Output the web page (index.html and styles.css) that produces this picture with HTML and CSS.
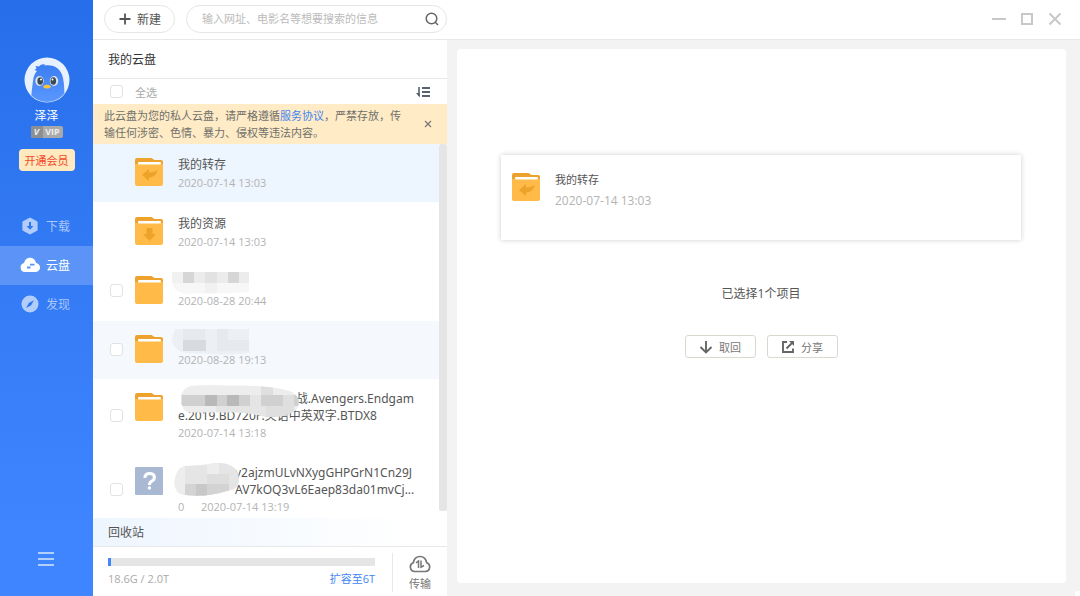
FILE: index.html
```html
<!DOCTYPE html>
<html lang="zh-CN">
<head>
<meta charset="utf-8">
<title>我的云盘</title>
<link rel="stylesheet" href="styles.css">
</head>
<body>
<svg class="sprite" aria-hidden="true">
  <symbol id="folder" viewBox="0 0 28 28">
    <path fill="#eda22e" d="M0 2a2 2 0 0 1 2-2h14.500l3 2H26a2 2 0 0 1 2 2v8H0z"/>
    <path fill="#ffba48" d="M0 6h28v20a2 2 0 0 1-2 2H2a2 2 0 0 1-2-2z"/>
    <rect x="3" y="4" width="23" height="2.400" rx="1" fill="#fff"/>
  </symbol>
  <symbol id="folder-reply" viewBox="0 0 28 28">
    <use href="#folder"/>
    <path fill="#eda22a" d="M7 17 14 11v3.500c4 0 7-1 8.500-3C22 16.500 18.500 19.500 14 19.500V23z"/>
  </symbol>
  <symbol id="folder-down" viewBox="0 0 28 28">
    <use href="#folder"/>
    <path fill="#eda22a" d="M11.500 11h6v6H21l-6.500 7L8 17h3.500z"/>
  </symbol>
</svg>
<div class="app">
  <aside class="sidebar">
    <svg class="avatar" viewBox="0 0 46 46">
      <defs><clipPath id="face"><circle cx="23" cy="23" r="22"/></clipPath>
      <linearGradient id="bird" x1="0" y1="0" x2="0" y2="1"><stop offset="0" stop-color="#3b7df2"/><stop offset="1" stop-color="#5b98ff"/></linearGradient></defs>
      <circle cx="23" cy="23" r="22.500" fill="#e8f1ff"/>
      <path clip-path="url(#face)" fill="url(#bird)" d="M7 46c0-8 1-14 2-22 .6-5 2-8 4-10l-2.500-1 2-1.500-1-2.500 3.500 .5c1.500-2 4-2.500 6-2L20 8.500c10-1.500 17 3 19 12.500 1.500 7 1.500 16 1.500 25z"/>
      <ellipse cx="15.500" cy="24" rx="4.200" ry="5" fill="#d9e2ec"/><ellipse cx="30" cy="24" rx="4.200" ry="5" fill="#d9e2ec"/>
      <ellipse cx="16.200" cy="24" rx="2.800" ry="3.800" fill="#3c4a56"/><ellipse cx="29.300" cy="24" rx="2.800" ry="3.800" fill="#3c4a56"/>
      <circle cx="17" cy="22.500" r="1" fill="#fff"/><circle cx="28.500" cy="22.500" r="1" fill="#fff"/>
      <path fill="#ffc43a" d="M19 29.500c1.500-2.500 6.500-2.500 8 0-1 2.800-7 2.800-8 0z"/>
    </svg>
    <div class="user">泽泽</div>
    <div class="vip"><span class="vip-mark">V</span><span class="vip-word">VIP</span></div>
    <button class="upgrade">开通会员</button>
    <nav class="nav">
      <a class="nav-item" href="#download">
        <svg viewBox="0 0 20 20"><path fill="#b3cdfb" d="M10 1.500 17 5.300a1 1 0 0 1 .6 1v7.400a1 1 0 0 1-.6 1L10 18.500 3 14.700a1 1 0 0 1-.6-1V6.300a1 1 0 0 1 .6-1z"/><path fill="#3179f2" d="M9 6h2v4h2.500L10 13.700 6.500 10H9z"/></svg>
        <span>下载</span></a>
      <a class="nav-item active" href="#cloud">
        <svg viewBox="0 0 20 20"><path fill="#fff" d="M5 17a4.500 4.500 0 0 1-.8-8.900C4.500 5 7 2.800 10 2.800S15.500 5 16 8a4.500 4.500 0 0 1-1 9z"/><path stroke="#5b94f6" stroke-width="1.800" d="M10 9.700h4.500M7 12.500h3.500"/></svg>
        <span>云盘</span></a>
      <a class="nav-item" href="#discover">
        <svg viewBox="0 0 20 20"><circle cx="10" cy="10" r="8.500" fill="#b3cdfb"/><path fill="#3179f2" d="M14 6.200 11 11.500 6 14l3-5.200z"/></svg>
        <span>发现</span></a>
    </nav>
    <button class="menu" aria-label="菜单"><svg viewBox="0 0 16 14"><path stroke="#b3cffd" stroke-width="2" d="M0 1h16M0 7h16M0 13h16"/></svg></button>
  </aside>
  <div class="workspace">
    <header class="topbar">
      <button class="new"><svg viewBox="0 0 12 12"><path stroke="#555" stroke-width="1.800" d="M6 .5v11M.5 6h11"/></svg>新建</button>
      <label class="search">
        <input type="text" aria-label="搜索" placeholder="输入网址、电影名等想要搜索的信息">
        <svg viewBox="0 0 14 14"><g fill="none" stroke="#666" stroke-width="1.500"><circle cx="6.500" cy="6.500" r="5.300"/><path d="m10.300 10.300 2.700 2.700"/></g></svg>
      </label>
      <div class="window-controls">
        <button aria-label="最小化"><svg viewBox="0 0 14 14"><path stroke="#c8c8c8" stroke-width="2" d="M0 7h14"/></svg></button>
        <button aria-label="最大化"><svg viewBox="0 0 14 14"><path fill="none" stroke="#c8c8c8" stroke-width="2" d="M2 2h10v10H2z"/></svg></button>
        <button aria-label="关闭"><svg viewBox="0 0 14 14"><path stroke="#c8c8c8" stroke-width="2" d="m1.500 1.500 11 11m0-11-11 11"/></svg></button>
      </div>
    </header>
    <div class="content">
      <section class="drive">
        <h1 class="drive-title">我的云盘</h1>
        <div class="select-row">
          <label class="select-all"><input class="check" type="checkbox">全选</label>
          <button class="sort" aria-label="排序"><svg viewBox="0 0 14 12"><path fill="none" stroke="#596270" stroke-width="2" d="M6 2h8M6 6h8M6 10h8"/><path fill="none" stroke="#596270" stroke-width="1.600" d="M3 1v9"/><path fill="#596270" d="M0 7h3.800v4.500z"/></svg></button>
        </div>
        <div class="notice">
          <p>此云盘为您的私人云盘，请严格遵循<a href="#terms">服务协议</a>，严禁存放，传输任何涉密、色情、暴力、侵权等违法内容。</p>
          <button aria-label="关闭提示"><svg viewBox="0 0 8 8"><path stroke="#777" stroke-width="1.200" d="m1 1 6 6m0-6L1 7"/></svg></button>
        </div>
        <div class="list-area">
          <ul class="files">
            <li class="file selected"><span class="pick"></span><svg class="icon"><use href="#folder-reply"/></svg>
              <div class="info"><div class="name">我的转存</div><div class="meta">2020-07-14 13:03</div></div></li>
            <li class="file"><span class="pick"></span><svg class="icon"><use href="#folder-down"/></svg>
              <div class="info"><div class="name">我的资源</div><div class="meta">2020-07-14 13:03</div></div></li>
            <li class="file"><span class="pick"><input class="check" type="checkbox" aria-label="选择"></span><svg class="icon"><use href="#folder"/></svg>
              <div class="info"><div class="name"></div><div class="meta">2020-08-28 20:44</div>
              <svg class="mask mask-short" viewBox="0 0 80 28"><path fill="#f7f7f7" d="M1 2h77v20c-20 2-50 1-64 2C5 22 1 17 1 10z"/><path fill="#ececec" d="M1 2h77v11H1z"/><path fill="#d6d6d6" d="M12 2h11v11H12zM57 2h11v11H57z"/><path fill="#e2e2e2" d="M34 2h12v11H34z"/><path fill="#f1f1f1" d="M34 13h12v10H34zM1 2h11v11H1z"/></svg></div></li>
            <li class="file hovered"><span class="pick"><input class="check" type="checkbox" aria-label="选择"></span><svg class="icon"><use href="#folder"/></svg>
              <div class="info"><div class="name"></div><div class="meta">2020-08-28 19:13</div>
              <svg class="mask mask-short" viewBox="0 0 80 28"><path fill="#eceff3" d="M4 0h74v22l3 1c-20 5-50 1-67 1C5 22 1 15 1 10z"/><path fill="#e6e9ed" d="M12 0h22v11H12zM46 0h11v22H46zM57 11h21v11H57z"/><path fill="#d7dade" d="M12 11h23v11H12z"/></svg></div></li>
            <li class="file long"><span class="pick"><input class="check" type="checkbox" aria-label="选择"></span><svg class="icon"><use href="#folder"/></svg>
              <div class="info"><div class="name film-name">复仇者联盟4：终局之战.Avengers.Endgame.2019.BD720P.英语中英双字.BTDX8</div><div class="meta">2020-07-14 13:18</div>
              <svg class="mask mask-film" viewBox="0 0 124 34"><defs><clipPath id="film"><path d="M4 9C8 0 18 2 28 1c30 1 65-1 86 7 8 5 9 12 3 19-14 8-30 7-42 3-20-4-50 0-66-2C3 25 3 17 4 9z"/></clipPath></defs><g clip-path="url(#film)"><path fill="#ededed" d="M0 0h124v34H0z"/><path fill="#d0d0d0" d="M0 11h124v11H0z"/><path fill="#b9b9b9" d="M27 11h12v11H27zM49 11h12v11H49z"/><path fill="#e5e5e5" d="M72 11h11v11H72zM38 22h50v12H38z"/><path fill="#dfdfdf" d="M83 0h12v11H83zM105 11h11v11h-11zM88 22h28v12H88z"/></g></svg></div></li>
            <li class="file long"><span class="pick"><input class="check" type="checkbox" aria-label="选择"></span>
              <svg class="icon" viewBox="0 0 28 28"><rect width="28" height="28" rx="1" fill="#a9b9d4"/><path fill="none" stroke="#fff" stroke-width="3" d="M9.800 10.800C10 7.500 12 6.500 14.500 6.500c6 0 6 5.500 2.500 7.500-2 1.200-2.600 2-2.600 4"/><circle cx="14.400" cy="21" r="1.700" fill="#fff"/></svg>
              <div class="info"><div class="name"><span class="hidden-part"></span>y2ajzmULvNXygGHPGrN1Cn29J<br><span class="hidden-part"></span>AV7kOQ3vL6Eaep83da01mvCj...</div><div class="meta"><span class="size">0</span>2020-07-14 13:19</div>
              <svg class="mask mask-hash" viewBox="0 0 68 36"><defs><clipPath id="hash"><path d="M5 9C9 1 22 5 36 2c20-4 30 4 30 15 0 8-4 11-12 12-14 5-36 6-46 3C-1 28 1 15 5 9z"/></clipPath></defs><g clip-path="url(#hash)"><path fill="#e5e5e5" d="M0 0h68v36H0z"/><path fill="#ededed" d="M0 0h12v36H0zM34 0h12v12H34z"/><path fill="#d3d3d3" d="M12 22h44v14H12z"/><path fill="#c8c8c8" d="M23 22h11v14H23z"/><path fill="#dedede" d="M34 12h22v10H34z"/></g></svg></div></li>
          </ul>
          <div class="scroll-thumb"></div>
        </div>
        <a class="recycle" href="#recycle">回收站</a>
        <footer class="quota">
          <div class="usage">
            <div class="bar"><div class="bar-fill"></div></div>
            <div class="usage-text"><span>18.6G / 2.0T</span><a href="#expand">扩容至6T</a></div>
          </div>
          <button class="transfer"><svg viewBox="0 0 22 18"><path fill="none" stroke="#777" stroke-width="1.700" d="M6 16.500h10.500a4.500 4.500 0 0 0 1.200-8.700C17 4 14.500 1.500 11 1.500S5 4 4.300 7.800A4.500 4.500 0 0 0 6 16.500z"/><path fill="none" stroke="#777" stroke-width="1.500" d="M7 7.800 9.500 6v7M12 5.500v6.800l3-1.800"/></svg>传输</button>
        </footer>
      </section>
      <main class="main">
        <div class="panel">
          <article class="card"><svg class="icon"><use href="#folder-reply"/></svg>
            <div><div class="card-name">我的转存</div><div class="card-date">2020-07-14 13:03</div></div></article>
          <p class="count">已选择1个项目</p>
          <div class="actions">
            <button><svg viewBox="0 0 14 14"><path fill="none" stroke="#666" stroke-width="1.900" d="M7 1v11M1.500 7 7 12.500 12.500 7"/></svg>取回</button>
            <button><svg viewBox="0 0 14 14"><path fill="none" stroke="#666" stroke-width="1.900" d="M6 2H2v10h10V8.500M5.500 8.500 11 3"/><path fill="#666" d="M8 1h5v5z"/></svg>分享</button>
          </div>
        </div>
      </main>
    </div>
  </div>
</div>
</body>
</html>
```
FILE: styles.css
```css
* { box-sizing: border-box; }
body, h1, p, ul { margin: 0; padding: 0; }
body { font-family: "Open Sans", "Noto Sans CJK SC", sans-serif; font-size: 12px; color: #555; }
button { padding: 0; border: 0; background: none; font: inherit; color: inherit; display: flex; align-items: center; justify-content: center; }
a { text-decoration: none; color: #4285f4; }
svg { display: block; flex: none; }
.sprite { position: absolute; width: 0; height: 0; }
.app { display: flex; height: 100vh; overflow: hidden; }

.sidebar { flex: none; width: 93px; padding-top: 57px; display: flex; flex-direction: column; align-items: center; background: linear-gradient(#276fea, #3f85ff 90%); color: #fff; }
.avatar { width: 46px; height: 46px; }
.user { margin-top: 4px; line-height: 18px; }
.vip { display: flex; width: 32px; height: 12px; margin-top: 1px; border-radius: 2px; overflow: hidden; background: #a9a9a9; font-size: 9px; line-height: 12px; font-weight: 700; color: #eee; }
.vip-mark { width: 12px; text-align: center; background: #8c8f94; font-style: italic; }
.vip-word { flex: 1; text-align: center; }
.upgrade { margin-top: 11px; width: 56px; height: 22px; border-radius: 4px; background: #ffe9be; color: #f04a2a; font-size: 11px; }
.nav { align-self: stretch; margin-top: 36px; }
.nav-item { display: flex; align-items: center; gap: 6px; height: 39px; padding: 0 0 1px 20px; color: #a9c7fb; }
.nav-item svg { width: 20px; height: 20px; }
.nav-item.active { background: #5b94f6; color: #fff; }
.menu { margin-top: auto; margin-bottom: 30px; margin-right: 2px; }
.menu svg { width: 16px; height: 14px; }

.workspace { flex: 1; min-width: 0; display: flex; flex-direction: column; }
.topbar { flex: none; height: 40px; display: flex; align-items: center; padding: 0 18px 2px 11px; border-bottom: 1px solid #e8e8e8; }
.new { gap: 6px; width: 71px; height: 28px; padding: 1px 0 0 1px; border: 1px solid #e6e6e6; border-radius: 14px; }
.new svg { width: 12px; height: 12px; }
.search { display: flex; align-items: center; width: 261px; height: 28px; margin-left: 11px; padding: 0 7px 0 15px; border: 1px solid #e6e6e6; border-radius: 14px; }
.search input { flex: 1; min-width: 0; padding: 0; border: 0; outline: 0; background: none; font: inherit; font-size: 11px; }
.search input::placeholder { color: #bbb; }
.search svg { width: 14px; height: 14px; }
.window-controls { display: flex; gap: 14px; margin-left: auto; }
.window-controls svg { width: 14px; height: 14px; }

.content { flex: 1; min-height: 0; display: flex; }
.drive { flex: none; width: 354px; display: flex; flex-direction: column; }
.drive-title { padding: 1px 0 0 15px; font-size: 12px; line-height: 37px; font-weight: 400; color: #333; border-bottom: 1px solid #e8e8e8; }
.select-row { display: flex; align-items: center; justify-content: space-between; height: 25px; padding: 0 17px; }
.select-all { display: flex; align-items: center; gap: 12px; color: #aaa; font-size: 11px; }
.check { appearance: none; display: block; width: 13px; height: 13px; margin: 0; border: 1px solid #e2e2e2; border-radius: 3px; background: #fff; }
.sort svg { width: 14px; height: 12px; }
.notice { display: flex; align-items: center; justify-content: space-between; height: 40px; padding: 0 15px 0 11px; background: #ffebc5; color: #70706c; font-size: 11px; line-height: 17px; }
.notice p { width: 304px; }
.notice svg { width: 8px; height: 8px; }
.list-area { flex: 1; min-height: 0; display: flex; overflow: hidden; }
.files { flex: 1; min-width: 0; display: flex; flex-direction: column; gap: 1px; list-style: none; }
.file { flex: none; display: flex; height: 58px; padding: 14px 0 0 17px; }
.selected { background: #edf5fe; }
.hovered { background: #f5f9fe; }
.pick { width: 25px; padding-top: 8px; }
.icon { width: 28px; height: 28px; }
.info { position: relative; flex: 1; min-width: 0; margin-left: 15px; margin-top: -3px; }
.name { min-height: 18px; padding-top: 1px; line-height: 18px; color: #555; }
.meta { margin-top: 1px; font-size: 11px; line-height: 16px; color: #b3b3b3; }
.name:empty { min-height: 19px; }
.long { height: 73px; padding-top: 13px; }
.long .pick { padding-top: 16px; }
.long .name { width: 240px; padding-top: 0; font-family: "Noto Sans", "Noto Sans CJK SC", sans-serif; line-height: 17px; word-break: break-all; }
.long .meta { margin-top: 1px; }
.film-name { text-indent: 3px; }
.size { display: inline-block; width: 23px; }
.hidden-part { display: inline-block; width: 57px; }
.mask { position: absolute; }
.mask-short { left: -7px; top: -3px; width: 80px; height: 28px; }
.mask-film { left: 0; top: -6px; width: 124px; height: 34px; }
.mask-hash { left: -5px; top: -2px; width: 68px; height: 36px; }
.scroll-thumb { flex: none; width: 8px; margin-bottom: 7px; border-radius: 2px; background: #e5e5e5; }
.recycle { flex: none; padding: 2px 0 0 15px; line-height: 26px; color: #555; background: linear-gradient(90deg, #edf5fe, #fff 90%); border-bottom: 1px solid #e8e8e8; }
.quota { flex: none; display: flex; align-items: center; height: 49px; padding: 2px 0 0 15px; }
.usage { flex: 1; }
.bar { height: 8px; background: #e5e5e5; }
.bar-fill { width: 1%; height: 8px; background: #4285ff; }
.usage-text { display: flex; justify-content: space-between; margin-top: 4px; font-size: 11px; line-height: 17px; color: #aaa; }
.transfer { flex-direction: column; gap: 3px; width: 55px; padding-top: 2px; margin-left: 17px; border-left: 1px solid #e8e8e8; font-size: 11px; line-height: 16px; color: #777; }
.transfer svg { width: 22px; height: 18px; }

.main { position: relative; flex: 1; min-width: 0; display: flex; padding: 9px 14px 13px 10px; background: #f3f3f3; }
.main::after { content: ""; position: absolute; right: 0; bottom: 0; width: 5px; height: 5px; border-radius: 2px 0 0 0; background: #fff; }
.panel { flex: 1; min-width: 0; padding: 106px 45px 0 44px; border-radius: 4px; background: #fff; }
.card { display: flex; gap: 15px; height: 85px; padding: 18px 11px; background: #fff; box-shadow: 0 0 5px rgba(0, 0, 0, 0.2); }
.card-name { margin-top: -2px; font-size: 11px; line-height: 17px; }
.card-date { margin-top: 4px; line-height: 18px; color: #b3b3b3; }
.count { margin-top: 45px; line-height: 18px; text-align: center; }
.actions { display: flex; justify-content: center; gap: 11px; margin-top: 32px; }
.actions button { gap: 6px; width: 71px; height: 23px; border: 1px solid #d9d9cf; border-radius: 3px; font-size: 11px; color: #777; }
.actions svg { width: 14px; height: 14px; }
```
